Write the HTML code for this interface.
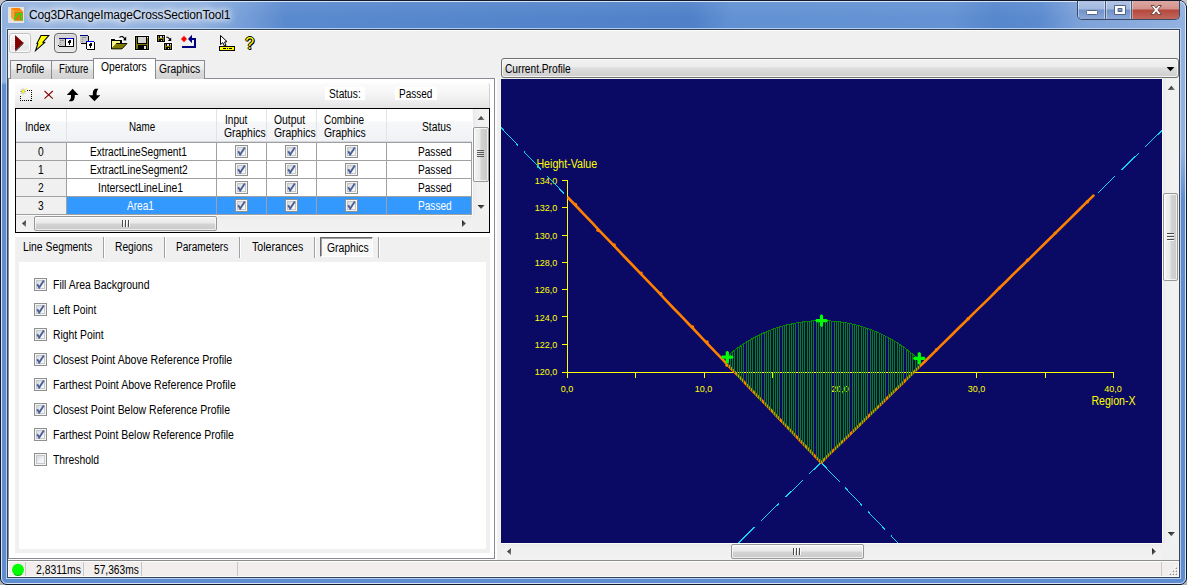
<!DOCTYPE html>
<html><head><meta charset="utf-8"><title>Cog3DRangeImageCrossSectionTool1</title>
<style>
*{box-sizing:border-box;margin:0;padding:0}
html,body{width:1187px;height:585px;overflow:hidden;background:#000}
body{font-family:"Liberation Sans",sans-serif;font-size:11px;color:#000;position:relative}
.a{position:absolute}
.t{position:absolute;white-space:nowrap;line-height:13px;height:13px;color:#000;font-size:12px;transform-origin:0 0}
.w{color:#fff}
#frame{left:0;top:0;width:1187px;height:585px;border-radius:8px 8px 7px 7px;background:#5f8dd0;overflow:hidden;border:1px solid #101a2c}
#client{left:8px;top:30px;width:1171px;height:547px;background:#f0f0f0}
.tab{position:absolute;top:60px;height:19px;border:1px solid #898c95;border-bottom:none;background:linear-gradient(180deg,#f4f4f4 0,#ebebeb 8px,#dedede 9px,#d2d2d2 18px)}
.tabsel{position:absolute;top:58px;height:21px;border:1px solid #898c95;border-bottom:none;background:#fff}
.cb{position:absolute;width:13px;height:13px;border:1px solid #8e8f8f;background:#f4f4f4}
.cb i{position:absolute;left:1px;top:1px;width:9px;height:9px;border:1px solid #c4c7cc;background:linear-gradient(135deg,#d4d7dc 0,#eceef0 50%,#fbfbfb 100%)}
.cb svg{position:absolute;left:1px;top:1px}
.sep{position:absolute;width:2px;border-left:1px solid #a0a0a0;border-right:1px solid #fff}
.hl{position:absolute;height:1px;background:#a0a0a0}
.vl{position:absolute;width:1px;background:#a0a0a0}
.hc{position:absolute;top:109px;height:32px;background:linear-gradient(180deg,#fff 0,#fff 12px,#f6f7f9 13px,#f1f2f5 32px);border-right:1px solid #e0e3e8}
.rh{position:absolute;left:16px;width:51px;height:18px;background:#f0f0f0;border-right:1px solid #a0a0a0;border-bottom:1px solid #a0a0a0}
.sbtrack{background:linear-gradient(90deg,#fbfbfb 0,#fbfbfb 1px,#e9e9e9 1px,#f0f0f0 5px,#f2f2f2 17px)}
.cg{position:absolute;width:6px;height:6px;background:#c4c4c4;top:0}
</style></head><body>
<div class="cg" style="left:0"></div><div class="cg" style="left:1181px"></div><div class="cg" style="left:0;top:579px;background:#b2b2b2"></div><div class="cg" style="left:1181px;top:579px;background:#b2b2b2"></div>
<div id="frame" class="a">
<div class="a" style="left:0;top:0;width:1185px;height:583px;background:#5f8dd0"></div>
<div class="a" style="left:0;top:0;width:1185px;height:30px;background:linear-gradient(90deg,#93b2de 0px,#98b6e1 110px,#8fb0df 200px,#729cd7 248px,#5989ce 285px,#5283ca 600px,#4f80c8 690px,#6291d3 730px,#6492d4 950px,#5686cc 995px,#5c8bcf 1040px,#7ca1d9 1076px,#93b2e0 1185px)"></div>
<div class="a" style="left:0;top:0;width:7px;height:81px;background:#93b2de"></div>
<div class="a" style="left:0;top:81px;width:7px;height:3px;background:linear-gradient(180deg,#93b2de,#5f8dd0)"></div>
<div class="a" style="left:1178px;top:0;width:7px;height:200px;background:linear-gradient(180deg,#93b2e0 0,#93b2e0 150px,#5f8dd0 200px)"></div>
<div class="a" style="left:0;top:0;width:1185px;height:30px;background:linear-gradient(180deg,rgba(255,255,255,.07),rgba(255,255,255,0) 60%)"></div>
<div class="a" style="left:0;top:0;width:1185px;height:583px;border:1px solid rgba(235,243,252,.85);border-radius:7px 7px 6px 6px"></div>
<div class="a" style="left:5px;top:27px;width:1175px;height:551px;border:1px solid rgba(200,221,246,.8)"></div>
<div class="a" style="left:6px;top:28px;width:1173px;height:549px;border:1px solid #36445c"></div>
<!-- icon -->
<svg class="a" style="left:7px;top:6px" width="16" height="16" viewBox="0 0 16 16">
<rect width="16" height="16" fill="#e6e4e0"/>
<polygon points="3,1 11.6,1 15,4.5 6.2,4.8" fill="#ff8606"/>
<polygon points="3,1 6.2,4.8 6.2,13.7 3,10.4" fill="#f2a636"/>
<polygon points="6.2,4.8 15,4.5 15,13.7 6.2,13.7" fill="#d67c06"/>
<path d="M6.4 12.4 L9.5 6.9 H13.5 V12.6 H15" fill="none" stroke="#08f010" stroke-width="1.3"/>
</svg>
<div class="t" id="ttl" style="left:28px;top:6px;font-size:12px;line-height:16px;height:16px;color:#000;letter-spacing:-0.15px;text-shadow:0 0 6px #fff,0 0 8px #fff,0 0 10px rgba(255,255,255,.9)">Cog3DRangeImageCrossSectionTool1</div>
<!-- caption buttons -->
<div class="a" style="left:1076px;top:-1px;width:103px;height:20px;border:1px solid #3a4a66;border-top:none;border-radius:0 0 5px 5px;overflow:hidden;background:#7c9dd3">
 <div class="a" style="left:0;top:0;width:28px;height:19px;background:linear-gradient(180deg,#b3c6e6 0,#a2b9df 9px,#7092ca 10px,#8ba8d8 19px);border-right:1px solid #4b5d7d;box-shadow:inset 1px 0 0 rgba(255,255,255,.45),inset -1px 0 0 rgba(255,255,255,.45)"></div>
 <div class="a" style="left:28px;top:0;width:26px;height:19px;background:linear-gradient(180deg,#b3c6e6 0,#a2b9df 9px,#7092ca 10px,#8ba8d8 19px);border-right:1px solid #4b5d7d;box-shadow:inset 1px 0 0 rgba(255,255,255,.45),inset -1px 0 0 rgba(255,255,255,.45)"></div>
 <div class="a" style="left:54px;top:0;width:48px;height:19px;background:linear-gradient(180deg,#dfaaa4 0,#d3928b 9px,#b5483d 10px,#c1675d 19px);box-shadow:inset 1px 0 0 rgba(255,255,255,.35),inset -1px 0 0 rgba(255,255,255,.35)"></div>
 <svg class="a" style="left:0;top:0" width="102" height="19" viewBox="0 0 102 19">
  <rect x="8.5" y="10.5" width="11" height="4" rx="1" fill="#fff" stroke="#54647e" stroke-width="1"/>
  <path d="M36.5 5.5h11v9h-11z M40 8.5h4v3h-4z" fill="#fff" fill-rule="evenodd" stroke="#54647e" stroke-width="1"/>
  <path d="M73 5.5h3.2l2 2.6 2-2.6h3.2l-3.5 4.4 3.6 4.6h-3.3l-2-2.7-2 2.7h-3.3l3.6-4.6z" fill="#fff" stroke="#6a4a48" stroke-width="1" stroke-linejoin="round"/>
 </svg>
</div>
</div>
<div id="client" class="a"></div>
<div id="ui" class="a" style="left:0;top:0;width:1187px;height:585px">
<svg class="a" width="0" height="0" style="left:0;top:0"><defs><linearGradient id="ag" x1="0" y1="0" x2="1" y2="1"><stop offset="0" stop-color="#0c0c0c"/><stop offset="1" stop-color="#8c8c8c"/></linearGradient></defs></svg>
<!-- ===== toolbar ===== -->
<div class="a" style="left:8px;top:30px;width:1171px;height:1px;background:#fdfdfd"></div>
<div class="a" style="left:9px;top:33px;width:22px;height:20px;border:1px solid #c2c2c2;border-radius:3px;background:linear-gradient(180deg,#f6f6f6 0,#efefef 11px,#e6e6e6 12px,#ececec 19px);box-shadow:inset 0 0 0 1px rgba(255,255,255,.8)"></div>
<svg class="a" style="left:8px;top:30px" width="260" height="28" viewBox="8 30 260 28">
 <!-- run triangle -->
 <polygon points="15,35 15,50.8 23.4,42.8" fill="#800000"/>
 <line x1="15.5" y1="51" x2="23.6" y2="43" stroke="#000" stroke-width="1"/>
 <line x1="14.6" y1="35" x2="14.6" y2="50" stroke="#fff" stroke-width="1" stroke-dasharray="1 1"/>
 <!-- lightning -->
 <path d="M41 35.5 L48.8 35.5 L43 42.2 L44.6 42.6 L35.6 50.6 L37.8 43.8 L36.9 43.6 Z" fill="#ffff00" stroke="#000" stroke-width="1.1" stroke-linejoin="miter"/>
</svg>
<!-- toggle button (checked) -->
<div class="a" style="left:54px;top:33px;width:23px;height:20px;border:1px solid #6a6a6a;border-radius:4px;background:linear-gradient(180deg,#cfcfcf 0,#dcdcdc 6px,#e6e6e6 19px);box-shadow:inset 0 0 0 1px rgba(255,255,255,.35)"></div>
<svg class="a" style="left:56px;top:32px" width="44" height="22" viewBox="56 32 44 22" shape-rendering="crispEdges">
 <!-- icon A: two side-by-side windows -->
 <rect x="59" y="38" width="15" height="9" fill="#000"/>
 <rect x="59" y="38" width="6" height="1" fill="#000080"/>
 <rect x="59" y="39" width="6" height="7" fill="#c8c8c8"/>
 <rect x="60" y="40" width="4" height="1" fill="#909090"/>
 <rect x="60" y="42" width="1" height="1" fill="#909090"/><rect x="60" y="44" width="1" height="1" fill="#909090"/>
 <rect x="66" y="38" width="7" height="1" fill="#0000ff"/>
 <rect x="66" y="39" width="7" height="7" fill="#fff"/>
 <rect x="68" y="40" width="3" height="3" fill="#000"/><rect x="68" y="40" width="1" height="1" fill="#fff"/><rect x="69" y="43" width="1" height="2" fill="#000"/>
 <rect x="58" y="45" width="1" height="1" fill="#000"/>
 <!-- icon B: cascaded windows -->
 <rect x="81" y="36" width="8" height="8" fill="#000"/>
 <rect x="80" y="35" width="8" height="1" fill="#000080"/>
 <rect x="80" y="36" width="8" height="7" fill="#c8c8c8"/>
 <rect x="82" y="37" width="4" height="1" fill="#909090"/>
 <rect x="82" y="39" width="1" height="1" fill="#909090"/><rect x="82" y="41" width="1" height="1" fill="#909090"/>
 <rect x="87" y="42" width="8" height="8" fill="#000"/>
 <rect x="86" y="41" width="8" height="1" fill="#0000ff"/>
 <rect x="87" y="42" width="7" height="7" fill="#fff"/><rect x="86" y="42" width="1" height="7" fill="#000"/>
 <rect x="89" y="43" width="3" height="3" fill="#000"/><rect x="89" y="43" width="1" height="1" fill="#fff"/><rect x="90" y="46" width="1" height="2" fill="#000"/>
</svg>
<svg class="a" style="left:106px;top:32px" width="154" height="22" viewBox="106 32 154 22">
 <g shape-rendering="crispEdges">
 <!-- open folder -->
 <rect x="110" y="38" width="14" height="12" fill="#fff" opacity=".9"/>
 <rect x="111" y="39" width="4" height="1" fill="#000"/>
 <rect x="111" y="40" width="11" height="9" fill="#000"/>
 <rect x="112" y="41" width="8" height="2" fill="#f6f68a"/>
 <rect x="112" y="41" width="2" height="7" fill="#f6f68a"/>
 </g>
 <polygon points="116,43.5 127,43.5 122,48.9 111.2,48.9" fill="#7e7a00" stroke="#000" stroke-width=".9"/>
 <polygon points="112,48 112,41 116.5,43.5" fill="#f6f68a"/>
 <path d="M119.5 37.5 q2.8 -2.6 5.6 1.6" fill="none" stroke="#000" stroke-width="1.1"/>
 <polygon points="126.2,36.6 126.2,40.4 123,40.2" fill="#000"/>
 <g shape-rendering="crispEdges">
 <!-- save -->
 <rect x="134" y="35" width="16" height="16" fill="#fff" opacity=".9"/>
 <rect x="135" y="36" width="14" height="14" fill="#000"/>
 <rect x="136" y="37" width="12" height="12" fill="#7e7600"/>
 <rect x="138" y="37" width="8" height="6" fill="#d4d4d4"/>
 <rect x="137" y="43" width="10" height="1" fill="#000"/><rect x="137" y="37" width="1" height="6" fill="#000"/><rect x="146" y="37" width="1" height="7" fill="#000"/>
 <rect x="138" y="45" width="9" height="4" fill="#000"/>
 <rect x="144" y="46" width="2" height="3" fill="#e0e0e0"/>
 <rect x="147" y="37" width="1" height="1" fill="#fff"/>
 <!-- save all -->
 <rect x="156" y="34" width="10" height="9" fill="#fff" opacity=".9"/>
 <rect x="163" y="42" width="10" height="9" fill="#fff" opacity=".9"/>
 <rect x="157" y="35" width="8" height="7" fill="#000"/>
 <rect x="158" y="36" width="1" height="5" fill="#8c8400"/><rect x="163" y="37" width="1" height="4" fill="#8c8400"/><rect x="159" y="38" width="4" height="1" fill="#8c8400"/>
 <rect x="160" y="36" width="2" height="2" fill="#d8d8e8"/><rect x="163" y="36" width="1" height="1" fill="#ddd"/><rect x="161" y="40" width="1" height="1" fill="#ddd"/>
 <rect x="164" y="43" width="8" height="7" fill="#000"/>
 <rect x="165" y="44" width="1" height="5" fill="#8c8400"/><rect x="170" y="45" width="1" height="4" fill="#8c8400"/><rect x="166" y="46" width="4" height="1" fill="#8c8400"/>
 <rect x="167" y="44" width="2" height="2" fill="#d8d8e8"/><rect x="170" y="44" width="1" height="1" fill="#ddd"/><rect x="168" y="48" width="1" height="1" fill="#ddd"/>
 </g>
 <path d="M166.3 37.2 h1.5 l2.4 2.4" fill="none" stroke="#000" stroke-width="1.1"/>
 <polygon points="171.2,37.4 171.2,41 167.8,41" fill="#000"/>
 <!-- reset -->
 <polygon points="184,35.4 187.4,39 184,42.6 180.6,39" fill="#ff0000" stroke="#fff" stroke-width=".6"/>
 <polygon points="188,39 192,34.8 192,43.2" fill="#000080"/>
 <path d="M192 39 H195 V47 H182" fill="none" stroke="#000080" stroke-width="2"/>
 <!-- cursor + ruler -->
 <polygon points="220.5,35.5 220.5,44.6 222.8,42.6 224.4,46 226,45.4 224.6,42 227,41.6" fill="#fff" stroke="#000" stroke-width="1"/>
 <rect x="219.5" y="46.5" width="15" height="4" fill="#ffff00" stroke="#000" stroke-width="1"/>
 <rect x="223" y="48" width="3" height="1" fill="#000"/><rect x="227" y="48" width="1" height="1" fill="#000"/><rect x="229" y="48" width="3" height="1" fill="#000"/>
</svg>
<div class="t" style="left:245.3px;top:35px;font-size:16px;font-weight:normal;line-height:17px;height:17px;color:#ffff00;transform:none;text-shadow:1px 0 0 #000,0 1px 0 #000,1px 1px 0 #000,-1px 0 0 #000,0 -1px 0 #000">?</div>

<!-- ===== top tabs ===== -->
<div class="a" style="left:495px;top:78px;width:2px;height:482px;background:#fdfdfd"></div>
<div class="a" style="left:8px;top:559px;width:489px;height:1px;background:#fdfdfd"></div>
<div class="a" style="left:8px;top:78px;width:487px;height:481px;border:1px solid #898c95;background:#fff"></div>
<div class="tab" style="left:10px;width:42px"></div>
<div class="tab" style="left:52px;width:42px;border-left:none"></div>
<div class="tab" style="left:155px;width:50px;border-left:none"></div>
<div class="tabsel" style="left:93px;width:63px"></div>

<!-- toolstrip -->
<div class="a" style="left:15px;top:83px;width:475px;height:25px;border-radius:3px 3px 0 0;background:linear-gradient(180deg,#fcfcfc 0,#f6f6f6 10px,#ebebeb 20px,#e4e4e4 25px);border-right:1px solid #d0d0d0"></div>
<div class="a" style="left:325px;top:87px;width:40px;height:13px;background:#fff"></div>
<div class="a" style="left:395px;top:87px;width:42px;height:13px;background:#fff"></div>
<svg class="a" style="left:16px;top:86px" width="90" height="18" viewBox="16 86 90 18">
 <rect x="20.5" y="90.5" width="11" height="10" fill="none" stroke="#000" stroke-width="1" stroke-dasharray="1 1" shape-rendering="crispEdges"/>
 <rect x="19" y="88" width="8" height="7" fill="#fafafa"/>
 <path d="M23 88.5 v6 M20 91.5 h6 M20.8 89.3 l4.4 4.4 M25.2 89.3 l-4.4 4.4" stroke="#9a9a7a" stroke-width=".8"/>
 <path d="M22 91.5 h2.4 M23.2 90 v3 M25.5 89.5 l1.2 -1" stroke="#ffff00" stroke-width="1.3"/>
 <path d="M44.5 91 L52.8 98.6 M52.8 91 L44.5 98.6" stroke="#800000" stroke-width="1.05"/>
 <path d="M72.6 88.8 L78.5 95 H74.8 V97 Q74.6 100 72.2 101.2 H68.8 Q71 99.6 71 97 V95 H66.8 Z" fill="#000"/>
 <path d="M94.5 101.2 L100.3 95.2 H96.6 V93 Q96.8 90.6 98.4 88.8 H95 Q92.8 90.4 92.8 93 V95.2 H88.6 Z" fill="#000"/>
</svg>

<!-- ===== grid ===== -->
<div class="a" style="left:15px;top:108px;width:475px;height:125px;border:1px solid #000;background:#fff"></div>
<div class="hc" style="left:16px;width:51px"></div>
<div class="hc" style="left:67px;width:150px"></div>
<div class="hc" style="left:217px;width:50px"></div>
<div class="hc" style="left:267px;width:50px"></div>
<div class="hc" style="left:317px;width:70px"></div>
<div class="hc" style="left:387px;width:85px;border-right:none"></div>
<div class="hl" style="left:16px;top:141px;width:456px;background:#d5d8de"></div>
<!-- rows -->
<div class="rh" style="top:142px;height:19px;border-top:1px solid #a0a0a0"></div>
<div class="rh" style="top:160px;height:19px;border-top:1px solid #a0a0a0"></div>
<div class="rh" style="top:178px;height:19px;border-top:1px solid #a0a0a0"></div>
<div class="rh" style="top:196px;height:19px;border-top:1px solid #a0a0a0"></div>
<div class="a" style="left:67px;top:197px;width:405px;height:17px;background:#3399ff"></div>
<div class="hl" style="left:67px;top:142px;width:405px"></div>
<div class="hl" style="left:67px;top:160px;width:405px"></div>
<div class="hl" style="left:67px;top:178px;width:405px"></div>
<div class="hl" style="left:67px;top:196px;width:405px"></div>
<div class="hl" style="left:67px;top:214px;width:405px"></div>
<div class="vl" style="left:216px;top:142px;height:73px"></div>
<div class="vl" style="left:266px;top:142px;height:73px"></div>
<div class="vl" style="left:316px;top:142px;height:73px"></div>
<div class="vl" style="left:386px;top:142px;height:73px"></div>
<div class="vl" style="left:471px;top:142px;height:73px"></div>
<div class="cb" style="left:235px;top:145px"><i></i><svg width="9" height="9" viewBox="0 0 9 9"><path d="M1.2 4.2 L3.2 7.6 L7.8 0.6" fill="none" stroke="#4b6097" stroke-width="1.9"/></svg></div>
<div class="cb" style="left:285px;top:145px"><i></i><svg width="9" height="9" viewBox="0 0 9 9"><path d="M1.2 4.2 L3.2 7.6 L7.8 0.6" fill="none" stroke="#4b6097" stroke-width="1.9"/></svg></div>
<div class="cb" style="left:345px;top:145px"><i></i><svg width="9" height="9" viewBox="0 0 9 9"><path d="M1.2 4.2 L3.2 7.6 L7.8 0.6" fill="none" stroke="#4b6097" stroke-width="1.9"/></svg></div>
<div class="cb" style="left:235px;top:163px"><i></i><svg width="9" height="9" viewBox="0 0 9 9"><path d="M1.2 4.2 L3.2 7.6 L7.8 0.6" fill="none" stroke="#4b6097" stroke-width="1.9"/></svg></div>
<div class="cb" style="left:285px;top:163px"><i></i><svg width="9" height="9" viewBox="0 0 9 9"><path d="M1.2 4.2 L3.2 7.6 L7.8 0.6" fill="none" stroke="#4b6097" stroke-width="1.9"/></svg></div>
<div class="cb" style="left:345px;top:163px"><i></i><svg width="9" height="9" viewBox="0 0 9 9"><path d="M1.2 4.2 L3.2 7.6 L7.8 0.6" fill="none" stroke="#4b6097" stroke-width="1.9"/></svg></div>
<div class="cb" style="left:235px;top:181px"><i></i><svg width="9" height="9" viewBox="0 0 9 9"><path d="M1.2 4.2 L3.2 7.6 L7.8 0.6" fill="none" stroke="#4b6097" stroke-width="1.9"/></svg></div>
<div class="cb" style="left:285px;top:181px"><i></i><svg width="9" height="9" viewBox="0 0 9 9"><path d="M1.2 4.2 L3.2 7.6 L7.8 0.6" fill="none" stroke="#4b6097" stroke-width="1.9"/></svg></div>
<div class="cb" style="left:345px;top:181px"><i></i><svg width="9" height="9" viewBox="0 0 9 9"><path d="M1.2 4.2 L3.2 7.6 L7.8 0.6" fill="none" stroke="#4b6097" stroke-width="1.9"/></svg></div>
<div class="cb" style="left:235px;top:199px"><i></i><svg width="9" height="9" viewBox="0 0 9 9"><path d="M1.2 4.2 L3.2 7.6 L7.8 0.6" fill="none" stroke="#4b6097" stroke-width="1.9"/></svg></div>
<div class="cb" style="left:285px;top:199px"><i></i><svg width="9" height="9" viewBox="0 0 9 9"><path d="M1.2 4.2 L3.2 7.6 L7.8 0.6" fill="none" stroke="#4b6097" stroke-width="1.9"/></svg></div>
<div class="cb" style="left:345px;top:199px"><i></i><svg width="9" height="9" viewBox="0 0 9 9"><path d="M1.2 4.2 L3.2 7.6 L7.8 0.6" fill="none" stroke="#4b6097" stroke-width="1.9"/></svg></div>
<!-- grid vscroll -->
<div class="a sbtrack" style="left:472px;top:109px;width:17px;height:106px"></div>
<div class="a" style="left:472px;top:215px;width:17px;height:17px;background:#f0f0f0"></div>
<div class="a" style="left:473px;top:127px;width:16px;height:55px;border:1px solid #979797;border-radius:2px;background:linear-gradient(90deg,#f4f4f4 0,#e9e9e9 6px,#d4d4d4 7px,#c6c6c6 15px);box-shadow:inset 0 0 0 1px rgba(255,255,255,.7)"></div>
<svg class="a" style="left:472px;top:109px" width="17" height="123" viewBox="0 0 17 123">
 <polygon points="5.6,11 9.1,7 12.6,11" fill="url(#ag)"/>
 <polygon points="5.6,96 12.6,96 9.1,100" fill="url(#ag)"/>
 <path d="M5 41.5h7M5 43.5h7M5 45.5h7M5 47.5h7" stroke="#5a5a5a" stroke-width="1" shape-rendering="crispEdges"/>
</svg>
<!-- grid hscroll -->
<div class="a" style="left:16px;top:215px;width:456px;height:17px;background:linear-gradient(180deg,#fbfbfb 0,#fbfbfb 1px,#e9e9e9 1px,#f0f0f0 5px,#f2f2f2 17px)"></div>
<div class="a" style="left:34px;top:216px;width:183px;height:15px;border:1px solid #979797;border-radius:2px;background:linear-gradient(180deg,#f4f4f4 0,#e9e9e9 6px,#d4d4d4 7px,#c6c6c6 15px);box-shadow:inset 0 0 0 1px rgba(255,255,255,.7)"></div>
<svg class="a" style="left:16px;top:215px" width="456" height="17" viewBox="0 0 456 17">
 <polygon points="10,5 10,12 6,8.5" fill="url(#ag)"/>
 <polygon points="446,5 446,12 450,8.5" fill="url(#ag)"/>
 <path d="M106.5 5v7M109.5 5v7M112.5 5v7" stroke="#4a4a4a" stroke-width="1" shape-rendering="crispEdges"/><path d="M107.5 5v7M110.5 5v7M113.5 5v7" stroke="#fafafa" stroke-width="1" shape-rendering="crispEdges"/>
</svg>

<!-- ===== lower panel ===== -->
<div class="a" style="left:15px;top:237px;width:475px;height:316px;background:#f0f0f0"></div>
<div class="a" style="left:19px;top:262px;width:467px;height:287px;background:#fff"></div>
<div class="sep" style="left:103px;top:237px;height:21px"></div>
<div class="sep" style="left:164px;top:237px;height:21px"></div>
<div class="sep" style="left:239px;top:237px;height:21px"></div>
<div class="sep" style="left:314px;top:237px;height:21px"></div>
<div class="sep" style="left:378px;top:237px;height:21px"></div>
<div class="a" style="left:320px;top:237px;width:53px;height:20px;border:1px solid;border-color:#696969 #fff #fff #696969;background:#f8f8f8;box-shadow:inset 1px 1px 0 #a0a0a0"></div>
<div class="cb" style="left:34px;top:278px"><i></i><svg width="9" height="9" viewBox="0 0 9 9"><path d="M1.2 4.2 L3.2 7.6 L7.8 0.6" fill="none" stroke="#4b6097" stroke-width="1.9"/></svg></div>
<div class="cb" style="left:34px;top:303px"><i></i><svg width="9" height="9" viewBox="0 0 9 9"><path d="M1.2 4.2 L3.2 7.6 L7.8 0.6" fill="none" stroke="#4b6097" stroke-width="1.9"/></svg></div>
<div class="cb" style="left:34px;top:328px"><i></i><svg width="9" height="9" viewBox="0 0 9 9"><path d="M1.2 4.2 L3.2 7.6 L7.8 0.6" fill="none" stroke="#4b6097" stroke-width="1.9"/></svg></div>
<div class="cb" style="left:34px;top:353px"><i></i><svg width="9" height="9" viewBox="0 0 9 9"><path d="M1.2 4.2 L3.2 7.6 L7.8 0.6" fill="none" stroke="#4b6097" stroke-width="1.9"/></svg></div>
<div class="cb" style="left:34px;top:378px"><i></i><svg width="9" height="9" viewBox="0 0 9 9"><path d="M1.2 4.2 L3.2 7.6 L7.8 0.6" fill="none" stroke="#4b6097" stroke-width="1.9"/></svg></div>
<div class="cb" style="left:34px;top:403px"><i></i><svg width="9" height="9" viewBox="0 0 9 9"><path d="M1.2 4.2 L3.2 7.6 L7.8 0.6" fill="none" stroke="#4b6097" stroke-width="1.9"/></svg></div>
<div class="cb" style="left:34px;top:428px"><i></i><svg width="9" height="9" viewBox="0 0 9 9"><path d="M1.2 4.2 L3.2 7.6 L7.8 0.6" fill="none" stroke="#4b6097" stroke-width="1.9"/></svg></div>
<div class="cb" style="left:34px;top:453px"><i></i></div>

<!-- ===== status bar ===== -->
<div class="a" style="left:8px;top:560px;width:1171px;height:1px;background:#8c8c8c"></div>
<div class="a" style="left:8px;top:561px;width:1171px;height:16px;background:#f1eeed"></div>
<div class="a" style="left:8px;top:561px;width:1171px;height:16px;border:1px solid #fcfcfc"></div>
<svg class="a" style="left:8px;top:561px" width="1171" height="16" viewBox="8 561 1171 16">
 <circle cx="18" cy="569.7" r="6" fill="#00ff00"/>
 <path d="M14 574 a6 6 0 0 0 8 0" stroke="#00b000" stroke-width="1" fill="none"/>
 <g stroke="#c9c6c4" stroke-width="1" shape-rendering="crispEdges">
  <path d="M25.5 562v14M83.5 562v14M141.5 562v14M237.5 562v14M1161.5 562v14"/>
 </g>
 <g shape-rendering="crispEdges"><rect x="1175" y="567" width="1" height="1" fill="#fff"/><rect x="1176" y="568" width="1" height="1" fill="#8c8c8c"/><rect x="1175" y="568" width="1" height="1" fill="#d0cdcc"/><rect x="1176" y="567" width="1" height="1" fill="#d0cdcc"/><rect x="1172" y="570" width="1" height="1" fill="#fff"/><rect x="1173" y="571" width="1" height="1" fill="#8c8c8c"/><rect x="1172" y="571" width="1" height="1" fill="#d0cdcc"/><rect x="1173" y="570" width="1" height="1" fill="#d0cdcc"/><rect x="1175" y="570" width="1" height="1" fill="#fff"/><rect x="1176" y="571" width="1" height="1" fill="#8c8c8c"/><rect x="1175" y="571" width="1" height="1" fill="#d0cdcc"/><rect x="1176" y="570" width="1" height="1" fill="#d0cdcc"/><rect x="1169" y="573" width="1" height="1" fill="#fff"/><rect x="1170" y="574" width="1" height="1" fill="#8c8c8c"/><rect x="1169" y="574" width="1" height="1" fill="#d0cdcc"/><rect x="1170" y="573" width="1" height="1" fill="#d0cdcc"/><rect x="1172" y="573" width="1" height="1" fill="#fff"/><rect x="1173" y="574" width="1" height="1" fill="#8c8c8c"/><rect x="1172" y="574" width="1" height="1" fill="#d0cdcc"/><rect x="1173" y="573" width="1" height="1" fill="#d0cdcc"/><rect x="1175" y="573" width="1" height="1" fill="#fff"/><rect x="1176" y="574" width="1" height="1" fill="#8c8c8c"/><rect x="1175" y="574" width="1" height="1" fill="#d0cdcc"/><rect x="1176" y="573" width="1" height="1" fill="#d0cdcc"/></g>
</svg>

<!-- ===== right: combo ===== -->
<div class="a" style="left:501px;top:58px;width:678px;height:20px;border:1px solid #707070;border-radius:3px;background:linear-gradient(180deg,#f2f2f2 0,#ebebeb 8px,#dddddd 9px,#cfcfcf 18px);box-shadow:inset 0 0 0 1px rgba(255,255,255,.75)"></div>
<svg class="a" style="left:1164px;top:64px" width="12" height="10" viewBox="0 0 12 10"><polygon points="2.6,3 10.4,3 6.5,7.2" fill="#000"/></svg>
<!-- display -->
<div class="a" style="left:501px;top:79px;width:661px;height:464px;background:#0a0a64"></div>
<!-- display vscroll -->
<div class="a sbtrack" style="left:1162px;top:79px;width:17px;height:464px"></div>
<div class="a" style="left:1163px;top:193px;width:15px;height:88px;border:1px solid #979797;border-radius:2px;background:linear-gradient(90deg,#f4f4f4 0,#e9e9e9 6px,#d4d4d4 7px,#c6c6c6 15px);box-shadow:inset 0 0 0 1px rgba(255,255,255,.7)"></div>
<svg class="a" style="left:1162px;top:79px" width="17" height="464" viewBox="0 0 17 464">
 <polygon points="5.8,11 9.4,6.8 13,11" fill="url(#ag)"/>
 <polygon points="5.8,453 13,453 9.4,457.2" fill="url(#ag)"/>
 <path d="M5 154.5h7M5 157.5h7M5 160.5h7" stroke="#4a4a4a" stroke-width="1" shape-rendering="crispEdges"/><path d="M5 155.5h7M5 158.5h7M5 161.5h7" stroke="#fafafa" stroke-width="1" shape-rendering="crispEdges"/>
</svg>
<!-- display hscroll -->
<div class="a" style="left:501px;top:543px;width:661px;height:17px;background:linear-gradient(180deg,#fbfbfb 0,#fbfbfb 1px,#e9e9e9 1px,#f0f0f0 5px,#f2f2f2 17px)"></div>
<div class="a" style="left:1162px;top:543px;width:17px;height:17px;background:#f0f0f0"></div>
<div class="a" style="left:731px;top:544px;width:133px;height:15px;border:1px solid #979797;border-radius:2px;background:linear-gradient(180deg,#f4f4f4 0,#e9e9e9 6px,#d4d4d4 7px,#c6c6c6 15px);box-shadow:inset 0 0 0 1px rgba(255,255,255,.7)"></div>
<svg class="a" style="left:501px;top:543px" width="661" height="17" viewBox="0 0 661 17">
 <polygon points="10,5 10,12 6,8.5" fill="url(#ag)"/>
 <polygon points="651,5 651,12 655,8.5" fill="url(#ag)"/>
 <path d="M292.5 5v7M295.5 5v7M298.5 5v7" stroke="#4a4a4a" stroke-width="1" shape-rendering="crispEdges"/><path d="M293.5 5v7M296.5 5v7M299.5 5v7" stroke="#fafafa" stroke-width="1" shape-rendering="crispEdges"/>
</svg>
<svg class="a" style="left:501px;top:79px" width="661" height="464" viewBox="501 79 661 464">
<g fill="#ffff00" shape-rendering="crispEdges">
<rect x="567" y="180" width="1" height="198"/>
<rect x="562" y="372" width="552" height="1"/>
<rect x="562" y="180" width="5" height="1"/>
<rect x="562" y="207" width="5" height="1"/>
<rect x="562" y="235" width="5" height="1"/>
<rect x="562" y="262" width="5" height="1"/>
<rect x="562" y="289" width="5" height="1"/>
<rect x="562" y="316" width="5" height="1"/>
<rect x="562" y="344" width="5" height="1"/>
<rect x="635" y="372" width="1" height="6"/>
<rect x="704" y="372" width="1" height="6"/>
<rect x="772" y="372" width="1" height="6"/>
<rect x="840" y="372" width="1" height="6"/>
<rect x="908" y="372" width="1" height="6"/>
<rect x="976" y="372" width="1" height="6"/>
<rect x="1045" y="372" width="1" height="6"/>
<rect x="1113" y="372" width="1" height="6"/>
</g>
<g fill="#ffff00" font-family="Liberation Sans, sans-serif" font-size="9px">
<text x="557.3" y="184.1" text-anchor="end">134,0</text>
<text x="557.3" y="211.4" text-anchor="end">132,0</text>
<text x="557.3" y="238.7" text-anchor="end">130,0</text>
<text x="557.3" y="266.0" text-anchor="end">128,0</text>
<text x="557.3" y="293.3" text-anchor="end">126,0</text>
<text x="557.3" y="320.6" text-anchor="end">124,0</text>
<text x="557.3" y="347.9" text-anchor="end">122,0</text>
<text x="557.3" y="375.2" text-anchor="end">120,0</text>
<text x="567.0" y="392.2" text-anchor="middle">0,0</text>
<text x="703.5" y="392.2" text-anchor="middle">10,0</text>
<text x="840.0" y="392.2" text-anchor="middle">20,0</text>
<text x="976.5" y="392.2" text-anchor="middle">30,0</text>
<text x="1113.0" y="392.2" text-anchor="middle">40,0</text>
</g>
<g fill="#ffff00" font-family="Liberation Sans, sans-serif" font-size="11px">
<text x="536.4" y="168" font-size="12px" textLength="60.8" lengthAdjust="spacingAndGlyphs">Height-Value</text>
<text x="1091.4" y="405" font-size="12px" textLength="44.2" lengthAdjust="spacingAndGlyphs">Region-X</text>
</g>
<defs><clipPath id="cc"><rect x="501" y="79" width="66.4" height="464"/><rect x="1095.6" y="79" width="70" height="464"/><rect x="501" y="462.8" width="661" height="81"/></clipPath></defs>
<g clip-path="url(#cc)">
<line x1="501.06" y1="127.64" x2="900" y2="545.10" stroke="#12d4f6" stroke-width="1" shape-rendering="crispEdges" stroke-dasharray="24.9 8.3"/>
<line x1="737.4" y1="543.90" x2="1164" y2="128.48" stroke="#12d4f6" stroke-width="1" shape-rendering="crispEdges" stroke-dasharray="24.57 8.93"/>
</g>
<polyline fill="none" stroke="#ff7f00" stroke-width="2.6" stroke-linejoin="round" stroke-linecap="butt" points="567.4,197.0 575.6,205.5 583.8,214.2 592.0,222.7 600.1,231.3 608.3,239.9 616.5,248.4 624.7,257.0 632.9,265.5 641.1,274.1 649.3,282.6 657.5,291.2 665.6,299.8 673.8,308.5 682.0,316.9 690.2,325.5 698.4,334.2 706.6,342.8 714.8,351.3 723.0,359.8 731.1,368.5 739.3,376.9 747.5,385.6 755.7,394.1 763.9,402.6 772.1,411.1 780.3,419.8 788.5,428.4 796.6,436.9 804.8,445.5 813.0,454.1 821.2,462.6 829.2,454.4 837.3,446.6 845.3,438.8 853.3,431.1 861.3,423.2 869.4,415.3 877.4,407.6 885.4,399.7 893.5,391.9 901.5,384.2 909.5,376.3 917.6,368.4 925.6,360.7 933.6,352.8 941.6,344.9 949.7,337.0 957.7,329.0 965.7,321.3 973.8,313.2 981.8,305.4 989.8,297.6 997.8,289.5 1005.9,281.7 1013.9,273.7 1021.9,266.0 1030.0,258.1 1038.0,250.1 1046.0,242.3 1054.1,234.3 1062.1,226.5 1070.1,218.6 1078.1,210.7 1086.2,202.7 1094.2,194.9"/>
<circle cx="575.5" cy="204.4" r="1.7" fill="#ff7f00"/><circle cx="598.0" cy="230.2" r="1.7" fill="#ff7f00"/><circle cx="614.2" cy="244.9" r="1.7" fill="#ff7f00"/><circle cx="641.1" cy="273.1" r="1.7" fill="#ff7f00"/><circle cx="660.8" cy="293.7" r="1.7" fill="#ff7f00"/><circle cx="692.6" cy="326.9" r="1.7" fill="#ff7f00"/><circle cx="707.0" cy="342.0" r="1.7" fill="#ff7f00"/><circle cx="727.1" cy="365.3" r="1.7" fill="#ff7f00"/><circle cx="936.5" cy="349.8" r="1.7" fill="#ff7f00"/><circle cx="968.1" cy="318.7" r="1.7" fill="#ff7f00"/><circle cx="999.4" cy="287.9" r="1.7" fill="#ff7f00"/><circle cx="1027.5" cy="260.3" r="1.7" fill="#ff7f00"/><circle cx="1055.2" cy="233.1" r="1.7" fill="#ff7f00"/><circle cx="1087.4" cy="201.7" r="1.7" fill="#ff7f00"/>
<path d="M728.5 355.3V367.0M730.5 353.6V369.1M732.5 351.9V371.2M734.5 350.3V373.3M737.5 348.1V376.5M739.5 346.6V378.5M741.5 345.3V380.6M743.5 343.9V382.7M746.5 342.0V385.9M748.5 340.8V388.0M750.5 339.6V390.1M752.5 338.5V392.2M755.5 336.9V395.3M757.5 335.8V397.4M759.5 334.8V399.5M761.5 333.9V401.6M764.5 332.5V404.7M766.5 331.7V406.8M768.5 330.9V408.9M770.5 330.1V411.0M773.5 329.0V414.1M775.5 328.3V416.2M777.5 327.6V418.3M779.5 327.0V420.4M782.5 326.1V423.5M784.5 325.5V425.6M786.5 325.0V427.7M789.5 324.3V430.9M791.5 323.8V433.0M793.5 323.4V435.1M795.5 323.1V437.1M798.5 322.5V440.3M800.5 322.2V442.4M802.5 321.9V444.5M804.5 321.7V446.6M807.5 321.4V449.7M809.5 321.2V451.8M811.5 321.0V453.9M813.5 320.9V456.0M816.5 320.8V459.1M818.5 320.7V461.2M820.5 320.7V463.3M822.5 320.7V462.4M825.5 320.8V459.5M827.5 320.8V457.6M829.5 320.9V455.6M831.5 321.1V453.7M834.5 321.3V450.7M836.5 321.5V448.8M838.5 321.8V446.9M840.5 322.0V444.9M843.5 322.5V442.0M845.5 322.8V440.0M847.5 323.2V438.1M849.5 323.6V436.1M852.5 324.2V433.2M854.5 324.7V431.3M856.5 325.2V429.3M858.5 325.7V427.4M861.5 326.6V424.5M863.5 327.2V422.5M865.5 327.8V420.6M867.5 328.5V418.6M870.5 329.6V415.7M872.5 330.3V413.7M874.5 331.1V411.8M876.5 331.9V409.8M879.5 333.3V406.9M881.5 334.2V405.0M883.5 335.1V403.0M885.5 336.1V401.1M888.5 337.7V398.2M890.5 338.8V396.2M892.5 340.0V394.3M894.5 341.1V392.3M897.5 343.0V389.4M899.5 344.3V387.5M901.5 345.7V385.5M903.5 347.1V383.6M906.5 349.3V380.6M908.5 350.8V378.7M910.5 352.4V376.7M912.5 354.1V374.8M915.5 356.7V371.9M917.5 358.5V369.9M919.5 360.4V368.0" stroke="#058405" stroke-width="1" fill="none" shape-rendering="crispEdges"/>
<polyline fill="none" stroke="#058405" stroke-width="1" shape-rendering="crispEdges" points="727.3,364.4 727.3,356.3 730.3,353.7 733.3,351.3 736.3,349.0 739.3,346.8 742.3,344.7 745.3,342.8 748.3,340.9 751.3,339.2 754.3,337.5 757.3,335.9 760.3,334.5 763.3,333.1 766.3,331.8 769.3,330.6 772.3,329.4 775.3,328.3 778.3,327.4 781.3,326.4 784.3,325.6 787.3,324.8 790.3,324.1 793.3,323.5 796.3,322.9 799.3,322.4 802.3,322.0 805.3,321.6 808.3,321.3 811.3,321.0 814.3,320.9 817.3,320.8 820.3,320.7 823.3,320.7 826.3,320.8 829.3,320.9 832.3,321.1 835.3,321.4 838.3,321.7 841.3,322.1 844.3,322.6 847.3,323.1 850.3,323.7 853.3,324.4 856.3,325.1 859.3,325.9 862.3,326.8 865.3,327.7 868.3,328.8 871.3,329.9 874.3,331.0 877.3,332.3 880.3,333.6 883.3,335.0 886.3,336.6 889.3,338.2 892.3,339.8 895.3,341.6 898.3,343.5 901.3,345.5 904.3,347.6 907.3,349.9 910.3,352.2 913.3,354.7 916.3,357.4 919.3,360.2 919.3,360.2 919.3,366.8"/>
<polygon fill="#00ff00" points="725.7,352.0 727.3,350.8 728.9,352.0 728.9,355.6 732.5,355.6 733.7,357.2 732.5,358.8 728.9,358.8 728.9,362.4 727.3,363.6 725.7,362.4 725.7,358.8 722.1,358.8 720.9,357.2 722.1,355.6 725.7,355.6"/>
<polygon fill="#00ff00" points="819.9,315.4 821.5,314.2 823.1,315.4 823.1,319.0 826.7,319.0 827.9,320.6 826.7,322.2 823.1,322.2 823.1,325.8 821.5,327.0 819.9,325.8 819.9,322.2 816.3,322.2 815.1,320.6 816.3,319.0 819.9,319.0"/>
<polygon fill="#00ff00" points="917.7,353.1 919.3,351.9 920.9,353.1 920.9,356.7 924.5,356.7 925.7,358.3 924.5,359.9 920.9,359.9 920.9,363.5 919.3,364.7 917.7,363.5 917.7,359.9 914.1,359.9 912.9,358.3 914.1,356.7 917.7,356.7"/>
</svg>
<div class="t " style="left:16.4px;top:63px;transform:scaleX(0.829);">Profile</div>
<div class="t " style="left:58.5px;top:63px;transform:scaleX(0.804);">Fixture</div>
<div class="t " style="left:100.8px;top:61px;transform:scaleX(0.856);">Operators</div>
<div class="t " style="left:158.8px;top:63px;transform:scaleX(0.858);">Graphics</div>
<div class="t " style="left:328.6px;top:88px;transform:scaleX(0.849);">Status:</div>
<div class="t " style="left:398.6px;top:88px;transform:scaleX(0.834);">Passed</div>
<div class="t " style="left:25.4px;top:121px;transform:scaleX(0.858);">Index</div>
<div class="t " style="left:128.8px;top:121px;transform:scaleX(0.818);">Name</div>
<div class="t " style="left:224.6px;top:114px;transform:scaleX(0.839);">Input</div>
<div class="t " style="left:223.8px;top:127px;transform:scaleX(0.866);">Graphics</div>
<div class="t " style="left:273.8px;top:114px;transform:scaleX(0.866);">Output</div>
<div class="t " style="left:273.8px;top:127px;transform:scaleX(0.866);">Graphics</div>
<div class="t " style="left:323.8px;top:114px;transform:scaleX(0.833);">Combine</div>
<div class="t " style="left:323.8px;top:127px;transform:scaleX(0.866);">Graphics</div>
<div class="t " style="left:422.2px;top:121px;transform:scaleX(0.858);">Status</div>
<div class="t " style="left:38.3px;top:146px;transform:scaleX(0.852);">0</div>
<div class="t " style="left:38.3px;top:164px;transform:scaleX(0.852);">1</div>
<div class="t " style="left:38.3px;top:182px;transform:scaleX(0.852);">2</div>
<div class="t " style="left:38.3px;top:200px;transform:scaleX(0.852);">3</div>
<div class="t " style="left:90.3px;top:146px;transform:scaleX(0.845);">ExtractLineSegment1</div>
<div class="t " style="left:90.3px;top:164px;transform:scaleX(0.852);">ExtractLineSegment2</div>
<div class="t " style="left:97.5px;top:182px;transform:scaleX(0.868);">IntersectLineLine1</div>
<div class="t w" style="left:127.2px;top:200px;transform:scaleX(0.843);">Area1</div>
<div class="t " style="left:418.3px;top:146px;transform:scaleX(0.842);">Passed</div>
<div class="t " style="left:418.3px;top:164px;transform:scaleX(0.842);">Passed</div>
<div class="t " style="left:418.3px;top:182px;transform:scaleX(0.842);">Passed</div>
<div class="t w" style="left:418.3px;top:200px;transform:scaleX(0.842);">Passed</div>
<div class="t " style="left:23.1px;top:241px;transform:scaleX(0.864);">Line Segments</div>
<div class="t " style="left:115.4px;top:241px;transform:scaleX(0.854);">Regions</div>
<div class="t " style="left:176.0px;top:241px;transform:scaleX(0.843);">Parameters</div>
<div class="t " style="left:252.0px;top:241px;transform:scaleX(0.884);">Tolerances</div>
<div class="t " style="left:326.9px;top:242px;transform:scaleX(0.866);">Graphics</div>
<div class="t " style="left:53.3px;top:279px;transform:scaleX(0.871);">Fill Area Background</div>
<div class="t " style="left:53.3px;top:304px;transform:scaleX(0.856);">Left Point</div>
<div class="t " style="left:53.3px;top:329px;transform:scaleX(0.864);">Right Point</div>
<div class="t " style="left:53.3px;top:354px;transform:scaleX(0.881);">Closest Point Above Reference Profile</div>
<div class="t " style="left:53.3px;top:379px;transform:scaleX(0.881);">Farthest Point Above Reference Profile</div>
<div class="t " style="left:53.3px;top:404px;transform:scaleX(0.873);">Closest Point Below Reference Profile</div>
<div class="t " style="left:53.3px;top:429px;transform:scaleX(0.875);">Farthest Point Below Reference Profile</div>
<div class="t " style="left:53.3px;top:454px;transform:scaleX(0.864);">Threshold</div>
<div class="t " style="left:36.0px;top:564px;transform:scaleX(0.869);">2,8311ms</div>
<div class="t " style="left:94.0px;top:564px;transform:scaleX(0.850);">57,363ms</div>
<div class="t " style="left:504.6px;top:63px;transform:scaleX(0.849);">Current.Profile</div>
</div>
</body></html>
